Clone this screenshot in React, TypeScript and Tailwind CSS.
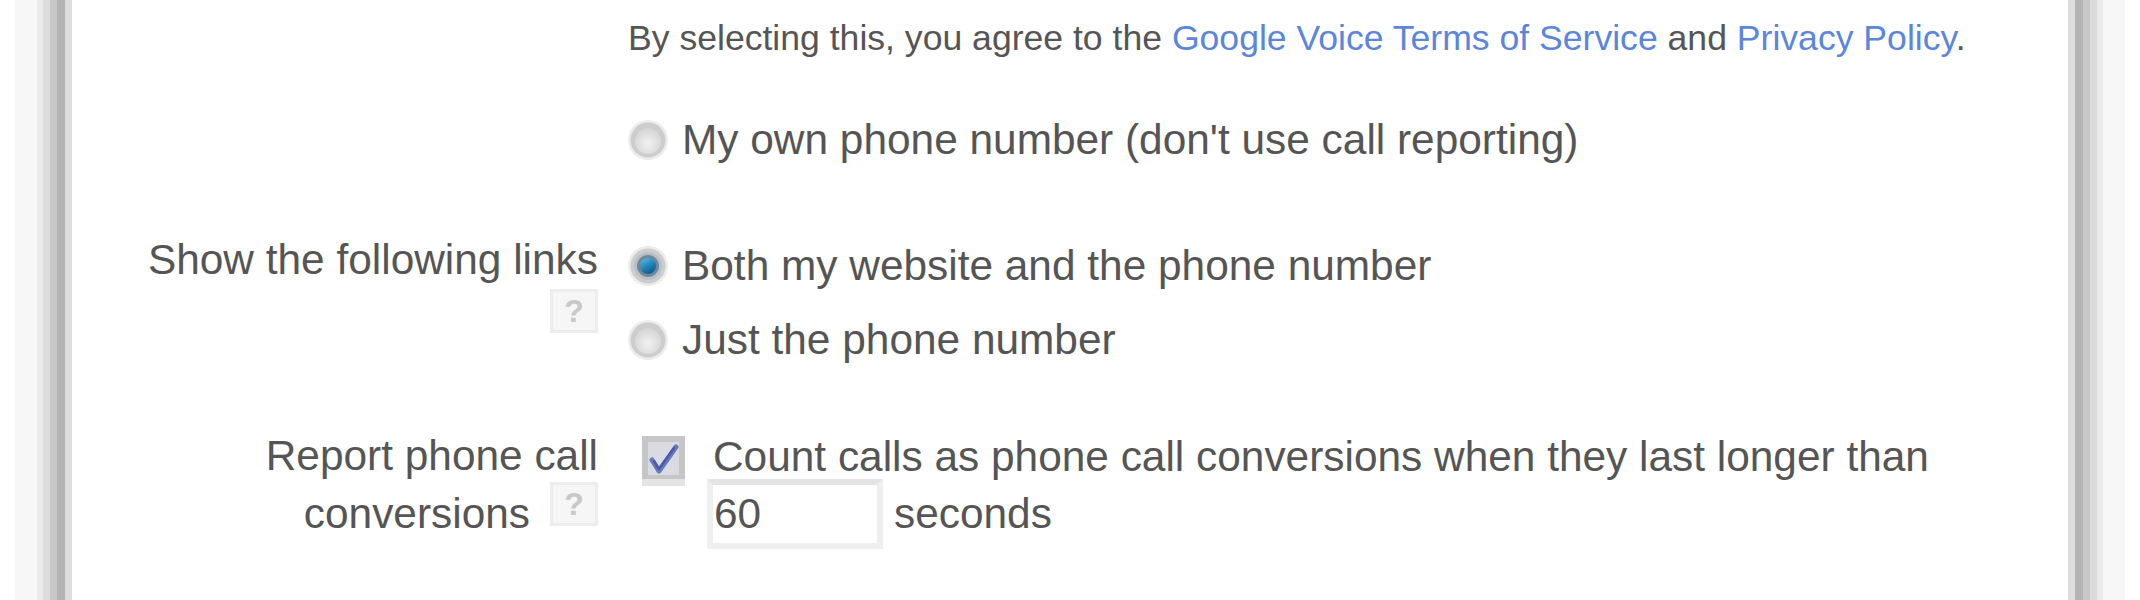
import React from "react";

const font = { fontFamily: '"Liberation Sans", Arial, sans-serif' };

function Radio({ checked }: { checked?: boolean }) {
  return (
    <svg width="42" height="42" viewBox="0 0 42 42" className="shrink-0">
      <defs>
        <radialGradient id="rg0" cx="50%" cy="60%" r="55%">
          <stop offset="0%" stopColor="#f2f2f2" />
          <stop offset="100%" stopColor="#d6d6d6" />
        </radialGradient>
        <linearGradient id="blue" x1="0" y1="0" x2="0.6" y2="1">
          <stop offset="0%" stopColor="#5cc4ec" />
          <stop offset="55%" stopColor="#2586bd" />
          <stop offset="100%" stopColor="#135a8c" />
        </linearGradient>
      </defs>
      <circle cx="21" cy="21" r="20" fill="#ececec" />
      <circle cx="21" cy="21" r="17.5" fill="#cdcdcd" />
      {checked ? (
        <>
          <circle cx="21" cy="21" r="14" fill="#b9c0c6" />
          <circle cx="21" cy="21" r="11" fill="#6f8798" />
          <circle cx="21" cy="21" r="8" fill="url(#blue)" />
        </>
      ) : (
        <circle cx="21" cy="22" r="13" fill="url(#rg0)" />
      )}
    </svg>
  );
}

function Checkbox() {
  return (
    <div className="shrink-0 shadow-[0_7px_0_#e4e4e4]">
      <svg width="43" height="43" viewBox="0 0 43 43" className="block">
        <rect x="0" y="0" width="43" height="43" fill="#c6c6c6" />
        <rect x="6" y="6" width="31" height="33" fill="#d9dae2" />
        <path d="M10 24 L17 35 L34 11" fill="none" stroke="#6878bc" strokeWidth="5" strokeLinecap="round" strokeLinejoin="round" />
        <path d="M12 25 L17 33 L32 12" fill="none" stroke="#4a5aa8" strokeWidth="2.5" strokeLinecap="round" strokeLinejoin="round" />
      </svg>
    </div>
  );
}

function Help() {
  return (
    <div
      className="flex h-[44px] w-[48px] shrink-0 items-center justify-center border-[3px] border-[#ededed] bg-[#f6f6f6] text-[32px] font-bold leading-none text-[#c8c8c8]"
      style={font}
    >
      ?
    </div>
  );
}

export default function App() {
  return (
    <div className="h-[600px] w-[2140px] overflow-hidden bg-white px-[15px]" style={font}>
      <div className="h-full bg-[#f7f7f7] px-[22px]">
        <div className="h-full bg-[#ebebeb] px-[6px]">
          <div className="h-full bg-[#dcdcdc] px-[7px]">
            <div className="h-full bg-[#c8c8c8] px-[7px]">
              <div className="h-full bg-[#b4b4b4] px-[8px]">
                <div className="h-full bg-[#dedede] px-[7px]">
                  <div className="h-full bg-white pt-[18px] text-[42.4px] text-[#555555]">
                    {/* Row A */}
                    <div className="flex">
                      <div className="w-[526px] shrink-0" />
                      <div className="ml-[30px] text-[35.6px] leading-[40px] whitespace-nowrap">
                        By selecting this, you agree to the{" "}
                        <span className="text-[#5b86dc]">Google Voice Terms of Service</span> and{" "}
                        <span className="text-[#5b86dc]">Privacy Policy</span>.
                      </div>
                    </div>

                    {/* Row B */}
                    <div className="mt-[58px] flex">
                      <div className="w-[526px] shrink-0" />
                      <div className="ml-[29px] flex h-[48px] items-center gap-[13px] leading-[48px] whitespace-nowrap">
                        <Radio />
                        <span>My own phone number (don't use call reporting)</span>
                      </div>
                    </div>

                    {/* Row C */}
                    <div className="mt-[72px] flex">
                      <div className="flex w-[526px] shrink-0 flex-col items-end">
                        <div className="leading-[48px] whitespace-nowrap">Show the following links</div>
                        <div className="mt-[5px]">
                          <Help />
                        </div>
                      </div>
                      <div className="ml-[29px] flex flex-col gap-[26px] pt-[6px]">
                        <div className="flex h-[48px] items-center gap-[13px] leading-[48px] whitespace-nowrap">
                          <Radio checked />
                          <span>Both my website and the phone number</span>
                        </div>
                        <div className="flex h-[48px] items-center gap-[13px] leading-[48px] whitespace-nowrap">
                          <Radio />
                          <span>Just the phone number</span>
                        </div>
                      </div>
                    </div>

                    {/* Row D */}
                    <div className="mt-[63px] flex">
                      <div className="flex w-[526px] shrink-0 flex-col items-end">
                        <div className="leading-[58px] whitespace-nowrap">Report phone call</div>
                        <div className="flex items-start gap-[20px]">
                          <span className="leading-[58px]">conversions</span>
                          <div className="mt-[-3px]">
                            <Help />
                          </div>
                        </div>
                      </div>
                      <div className="ml-[44px] flex items-start gap-[28px] pt-[9px]">
                        <Checkbox />
                        <div className="-mt-[2px] flex flex-col">
                          <div className="leading-[46px] whitespace-nowrap">
                            Count calls as phone call conversions when they last longer than
                          </div>
                          <div className="-ml-[6px] -mt-[1px] flex items-center gap-[11px]">
                            <div className="flex h-[70px] w-[176px] items-center border-[6px] border-[#efefef] border-t-[#e4e4e4] bg-white pl-[1px] leading-[48px]">
                              60
                            </div>
                            <span className="leading-[48px]">seconds</span>
                          </div>
                        </div>
                      </div>
                    </div>
                  </div>
                </div>
              </div>
            </div>
          </div>
        </div>
      </div>
    </div>
  );
}
